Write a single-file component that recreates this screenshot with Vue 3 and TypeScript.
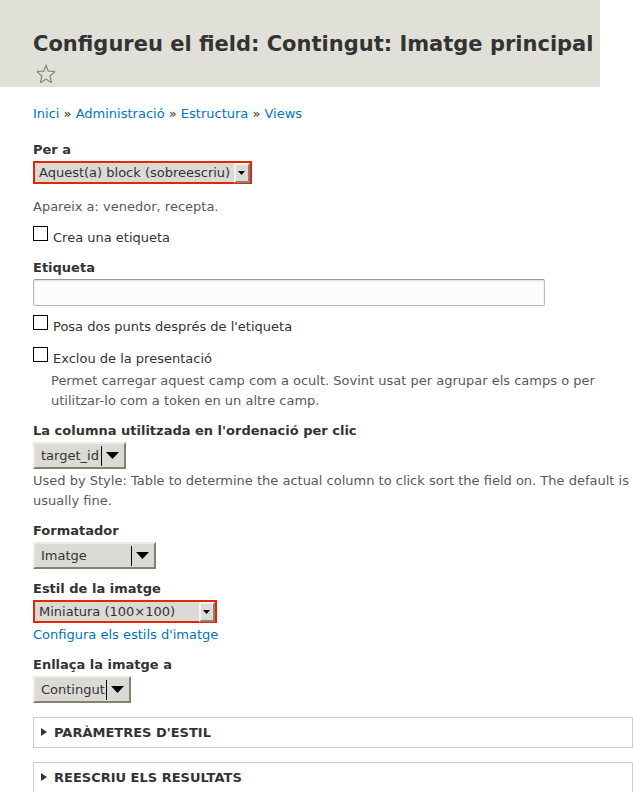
<script setup lang="ts">
import { ref } from 'vue'

interface Crumb {
  text: string
  href: string
}

const crumbs: Crumb[] = [
  { text: 'Inici', href: '#inici' },
  { text: 'Administració', href: '#administracio' },
  { text: 'Estructura', href: '#estructura' },
  { text: 'Views', href: '#views' },
]

const panels: string[] = ["Paràmetres d'estil", 'Reescriu els resultats']

const scope = ref('block')
const createLabel = ref(false)
const label = ref('')
const colon = ref(false)
const exclude = ref(false)
const column = ref('target_id')
const formatter = ref('image')
const imageStyle = ref('thumbnail')
const linkTo = ref('content')
</script>

<template>
  <div class="page">
    <header class="header">
      <h1 class="title">Configureu el field: Contingut: Imatge principal</h1>
      <a class="shortcut" href="#shortcut" aria-label="★">
        <svg width="20" height="20" viewBox="0 0 20 20" aria-hidden="true">
          <path
            d="M10 1.3 L12.3 7.1 L18.4 7.4 Q18.9 7.6 18.5 8.1 L14 12 L15.5 17.9 Q15.5 18.6 14.8 18.3 L10 15.1 L5.2 18.3 Q4.5 18.6 4.5 17.9 L6 12 L1.5 8.1 Q1.1 7.6 1.6 7.4 L7.7 7.1 Z"
          />
        </svg>
      </a>
    </header>

    <main class="content">
      <nav class="breadcrumb">
        <template v-for="(crumb, i) in crumbs" :key="crumb.href">
          <span v-if="i > 0"> » </span><a :href="crumb.href">{{ crumb.text }}</a>
        </template>
      </nav>

      <form class="form" @submit.prevent>
        <div class="item">
          <label class="label" for="scope">Per a</label>
          <div class="pick small scope">
            <select id="scope" v-model="scope">
              <option value="block">Aquest(a) block (sobreescriu)</option>
            </select>
            <span class="button"><svg width="7" height="4" viewBox="0 0 7 4"><path d="M0 0H7L3.5 4Z" /></svg></span>
          </div>
          <p class="description applies">Apareix a: venedor, recepta.</p>
        </div>

        <div class="check">
          <input id="create-label" v-model="createLabel" type="checkbox" />
          <label for="create-label">Crea una etiqueta</label>
        </div>

        <div class="item">
          <label class="label" for="label-text">Etiqueta</label>
          <input id="label-text" v-model="label" class="text" type="text" />
        </div>

        <div class="check">
          <input id="colon" v-model="colon" type="checkbox" />
          <label for="colon">Posa dos punts després de l'etiqueta</label>
        </div>

        <div class="item">
          <div class="check">
            <input id="exclude" v-model="exclude" type="checkbox" />
            <label for="exclude">Exclou de la presentació</label>
          </div>
          <p class="description indented">
            Permet carregar aquest camp com a ocult. Sovint usat per agrupar els camps o per utilitzar-lo com a token
            en un altre camp.
          </p>
        </div>

        <div class="item">
          <label class="label" for="column">La columna utilitzada en l'ordenació per clic</label>
          <div class="pick large column">
            <select id="column" v-model="column">
              <option value="target_id">target_id</option>
            </select>
            <span class="arrow"><svg width="13" height="7" viewBox="0 0 13 7"><path d="M0 0H13L6.5 7Z" /></svg></span>
          </div>
          <p class="description">
            Used by Style: Table to determine the actual column to click sort the field on. The default is usually
            fine.
          </p>
        </div>

        <div class="item">
          <label class="label" for="formatter">Formatador</label>
          <div class="pick large formatter">
            <select id="formatter" v-model="formatter">
              <option value="image">Imatge</option>
            </select>
            <span class="arrow"><svg width="13" height="7" viewBox="0 0 13 7"><path d="M0 0H13L6.5 7Z" /></svg></span>
          </div>
        </div>

        <div class="item">
          <label class="label" for="image-style">Estil de la imatge</label>
          <div class="pick small image-style">
            <select id="image-style" v-model="imageStyle">
              <option value="thumbnail">Miniatura (100×100)</option>
            </select>
            <span class="button"><svg width="7" height="4" viewBox="0 0 7 4"><path d="M0 0H7L3.5 4Z" /></svg></span>
          </div>
          <p class="description"><a href="#estils">Configura els estils d'imatge</a></p>
        </div>

        <div class="item">
          <label class="label" for="link-to">Enllaça la imatge a</label>
          <div class="pick large link-to">
            <select id="link-to" v-model="linkTo">
              <option value="content">Contingut</option>
            </select>
            <span class="arrow"><svg width="13" height="7" viewBox="0 0 13 7"><path d="M0 0H13L6.5 7Z" /></svg></span>
          </div>
        </div>

        <div class="panels">
          <details v-for="panel in panels" :key="panel" class="panel">
            <summary>
              <svg width="6" height="8" viewBox="0 0 6 8" aria-hidden="true"><path d="M0 0L6 4L0 8Z" /></svg>
              {{ panel }}
            </summary>
          </details>
        </div>
      </form>
    </main>
  </div>
</template>

<style>
body {
  margin: 0;
  background: #fff;
}
</style>

<style scoped>
.page {
  font-family: 'DejaVu Sans', Verdana, sans-serif;
  font-size: 13px;
  line-height: 20px;
  color: #333;
}

a {
  color: #0074bd;
  text-decoration: none;
}

.header {
  box-sizing: border-box;
  margin-right: 33px;
  padding: 28px 0 3px 33px;
  background: #e0e0d8;
}

.title {
  margin: 0;
  font-size: 21px;
  line-height: 32px;
  font-weight: bold;
}

.shortcut {
  display: flex;
  padding: 4px 3px 0;
}

.shortcut path {
  fill: none;
  stroke: #85856f;
  stroke-width: 1.2;
}

.content {
  padding: 17px 0 0 33px;
}

.form {
  display: flex;
  flex-direction: column;
  gap: 9px;
  margin-top: 16px;
}

.label {
  display: block;
  margin-bottom: 1px;
  font-weight: bold;
}

.description {
  margin: 0;
  padding: 1px 0;
  color: #595959;
}

.applies {
  margin-top: 12px;
  padding-bottom: 0;
}

.indented {
  padding-left: 18px;
}

.check {
  display: flex;
  align-items: flex-start;
  gap: 5px;
}

.check label {
  padding: 2px 0 1px;
}

.check input {
  appearance: none;
  box-sizing: border-box;
  width: 15px;
  height: 15px;
  margin: 0;
  border: 1px solid #000;
  background: #fff;
}

.check input:checked {
  background: #333;
  box-shadow: inset 0 0 0 3px #fff;
}

.text {
  display: block;
  box-sizing: border-box;
  width: 100%;
  max-width: 512px;
  height: 27px;
  padding: 4px 8px;
  border: 1px solid #b8b8b8;
  border-top-color: #999;
  border-radius: 2px;
  background: #fcfcfa;
  box-shadow: inset 0 1px 2px rgba(0, 0, 0, 0.125);
  font: inherit;
  color: inherit;
}

.pick {
  display: grid;
  box-sizing: border-box;
  margin-bottom: 1px;
  background: #dcdad5;
}

.pick select {
  grid-area: 1 / 1;
  appearance: none;
  min-width: 0;
  margin: 0;
  border: 0;
  border-radius: 0;
  background: transparent;
  font: inherit;
  color: inherit;
}

.pick span {
  grid-area: 1 / 1;
  justify-self: end;
  display: flex;
  align-items: center;
  justify-content: center;
  box-sizing: border-box;
  pointer-events: none;
}

.small {
  height: 23px;
  border: 2px solid #e62600;
}

.small select {
  padding: 0 4px;
}

.large {
  height: 27px;
  border: 2px solid;
  border-color: #eeebe7 #85816f #85816f #eeebe7;
}

.large select {
  padding: 0 6px;
}

.pick .button {
  width: 16px;
  padding-right: 1px;
  border: 2px solid;
  border-color: #f4f2ee #85837c #85837c #f4f2ee;
}

.pick .arrow {
  width: 23px;
  margin: 2px 0 1px;
  padding: 0 2px 1px 0;
  border-left: 1px solid #000;
}

.scope {
  width: 219px;
}

.column {
  width: 93px;
}

.formatter {
  width: 123px;
}

.image-style {
  width: 184px;
}

.link-to {
  width: 98px;
}

.panels {
  display: flex;
  flex-direction: column;
  gap: 14px;
  margin-top: 4px;
}

.panel {
  border: 1px solid #ccc;
}

.panel summary {
  display: flex;
  align-items: center;
  gap: 7px;
  padding: 5px 7px 4px;
  font-weight: bold;
  text-transform: uppercase;
  list-style: none;
  cursor: pointer;
}

.panel svg {
  margin-bottom: 2px;
}

.panel path {
  fill: #333;
}
</style>
